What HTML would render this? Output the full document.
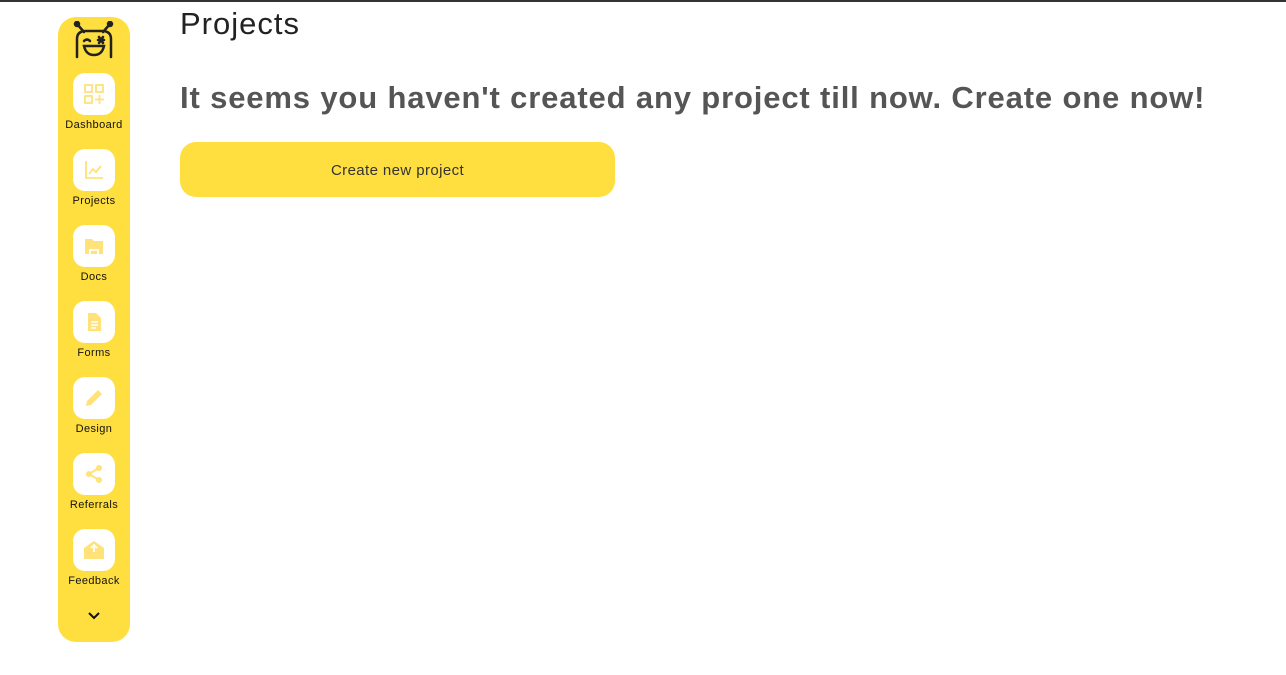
<!DOCTYPE html>
<html><head><style>
body{margin:0;width:1286px;height:675px;background:#fff;font-family:"Liberation Sans",sans-serif;position:relative;overflow:hidden}
.top{position:absolute;left:0;top:0;width:1286px;height:2px;background:#333}
.side{position:absolute;left:58px;top:17px;width:72px;height:625px;background:#FFDF3F;border-radius:18px}
.item{position:absolute;left:0;width:72px;text-align:center}
.box{width:42px;height:42px;background:#fff;border-radius:12px;margin:0 auto;display:flex;align-items:center;justify-content:center}
.lbl{font-size:11px;color:#111;margin-top:4px;letter-spacing:.4px}
h1{position:absolute;left:180px;top:6px;margin:0;font-weight:normal;font-size:31px;color:#222;letter-spacing:1px}
h2{position:absolute;left:180px;top:80px;margin:0;font-size:31px;font-weight:bold;color:#555;letter-spacing:.85px}
.btn{position:absolute;left:180px;top:142px;width:435px;height:55px;background:#FFDF3F;border-radius:16px;display:flex;align-items:center;justify-content:center;font-size:15px;color:#333;letter-spacing:.4px;padding-top:2px;box-sizing:border-box}
</style></head><body>
<div class="top"></div>
<div class="side">
 <svg style="position:absolute;left:14px;top:4px" width="44" height="40" viewBox="0 0 44 40" fill="none" stroke="#222" stroke-width="2.5" stroke-linecap="round">
  <circle cx="5" cy="3" r="2" fill="#222"/><circle cx="38" cy="3" r="2" fill="#222"/>
  <path d="M5 3 L12 11 M38 3 L31 11"/>
  <path d="M5 36 V18 Q5 10 14 10 H30 Q39 10 39 18 V36"/>
  <path d="M12 20 Q15 17 18 20"/><path d="M27 16 l4 6 M31 16 l-4 6 M26 19 h6"/>
  <path d="M12 25 H32 Q30 34 22 34 Q14 34 12 25Z"/>
 </svg>
 <div class="item" style="top:56px"><div class="box"><svg width="22" height="22" viewBox="0 0 22 22" fill="none" stroke="#FFE27A" stroke-width="1.8"><rect x="2" y="2" width="7" height="7"/><rect x="13" y="2" width="7" height="7"/><rect x="2" y="13" width="7" height="7"/><path d="M16.5 12v9M12 16.5h9"/></svg></div><div class="lbl">Dashboard</div></div>
 <div class="item" style="top:132px"><div class="box"><svg width="22" height="22" viewBox="0 0 22 22" fill="none" stroke="#FFE27A" stroke-width="1.8"><path d="M3 2v17h17M6 15l4-5 3 3 5-6"/></svg></div><div class="lbl">Projects</div></div>
 <div class="item" style="top:208px"><div class="box"><svg width="22" height="22" viewBox="0 0 22 22"><path d="M2 4h7l2 2h9v13H2z" fill="#FFE27A"/><path d="M7 19v-4h8v4" stroke="#fff" stroke-width="1.8" fill="none"/></svg></div><div class="lbl">Docs</div></div>
 <div class="item" style="top:284px"><div class="box"><svg width="22" height="22" viewBox="0 0 22 22"><path d="M5 2h8l5 5v13H5z" fill="#FFE27A"/><path d="M8 11h7M8 14h7M8 17h5" stroke="#fff" stroke-width="1.5"/></svg></div><div class="lbl">Forms</div></div>
 <div class="item" style="top:360px"><div class="box"><svg width="22" height="22" viewBox="0 0 22 22"><path d="M3 19l1-5L15 3l4 4L8 18z" fill="#FFE27A"/></svg></div><div class="lbl">Design</div></div>
 <div class="item" style="top:436px"><div class="box"><svg width="22" height="22" viewBox="0 0 22 22" fill="#FFE27A"><circle cx="16" cy="5" r="3"/><circle cx="6" cy="11" r="3"/><circle cx="16" cy="17" r="3"/><path d="M16 5L6 11L16 17" stroke="#FFE27A" stroke-width="2" fill="none"/></svg></div><div class="lbl">Referrals</div></div>
 <div class="item" style="top:512px"><div class="box"><svg width="24" height="22" viewBox="0 0 24 22"><path d="M2 9l10-7 10 7v11H2z" fill="#FFE27A"/><path d="M12 13V6M9 9l3-3 3 3" stroke="#fff" stroke-width="1.8" fill="none"/></svg></div><div class="lbl">Feedback</div></div>
 <svg style="position:absolute;left:30px;top:595px" width="12" height="8" viewBox="0 0 12 8"><path d="M1 1l5 5 5-5" stroke="#111" stroke-width="2" fill="none"/></svg>
</div>
<h1>Projects</h1>
<h2>It seems you haven't created any project till now. Create one now!</h2>
<div class="btn">Create new project</div>
</body></html>
